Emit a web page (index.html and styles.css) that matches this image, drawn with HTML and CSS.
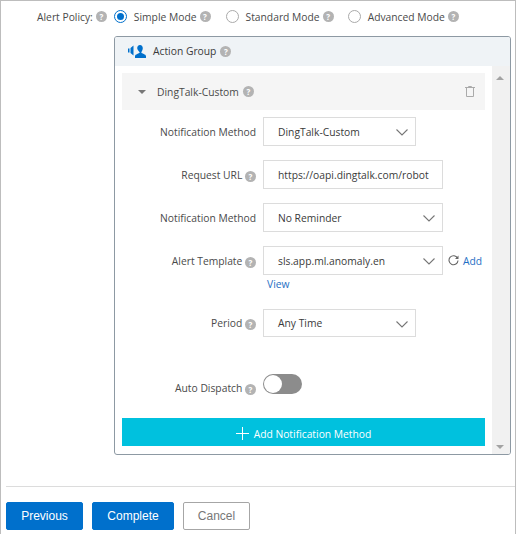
FILE: index.html
```html
<!DOCTYPE html>
<html lang="en">

<head>
    <meta charset="UTF-8">
    <title>Alert Policy</title>
    <link rel="stylesheet" href="styles.css">
</head>

<body>
    <div class="frame">
        <div class="policy">
            <span class="policy-label">Alert Policy:</span>
            <i class="help">?</i>
            <span class="radio checked"></span>
            <span class="radio-text">Simple Mode</span>
            <i class="help">?</i>
            <span class="radio second"></span>
            <span class="radio-text">Standard Mode</span>
            <i class="help">?</i>
            <span class="radio third"></span>
            <span class="radio-text">Advanced Mode</span>
            <i class="help">?</i>
        </div>

        <div class="panel">
            <div class="panel-head">
                <svg class="group-icon" width="18" height="13" viewBox="0 0 18 13">
                    <path d="M0 3.500h1.500v4H0zM2.500 3l3-2.500v10l-3-2.500z" fill="#0070cc" />
                    <path d="M12 0c1.800 0 2.800 1.300 2.800 3.200S13.500 6.500 13.300 7.500c.3 1.200 4.700 1.500 4.700 3.700V13H7v-1.800c0-2.200 4.400-2.500 4.700-3.700C11.500 6.500 9.200 5.100 9.200 3.200S10.200 0 12 0z" fill="#0070cc" />
                </svg>
                <span>Action Group</span>
                <i class="help">?</i>
            </div>
            <div class="panel-body">
                <div class="content">
                    <div class="item-head">
                        <span class="caret"></span>
                        <span>DingTalk-Custom</span>
                        <i class="help">?</i>
                        <svg class="trash" width="10" height="11" viewBox="0 0 10 11">
                            <path d="M0 1.500h10M3.500 1.500V.5h3v1M1.500 1.500v9h7v-9" fill="none" stroke="#aaa" />
                        </svg>
                    </div>

                    <div class="row row-first">
                        <label>Notification Method</label>
                        <div class="select short">DingTalk-Custom<svg class="chevron" width="12" height="7" viewBox="0 0 12 7"><path d="M.5.500l5.500 5.500 5.500-5.500" fill="none" stroke="#777" stroke-width="1.100" /></svg></div>
                    </div>
                    <div class="row">
                        <label>Request URL <i class="help">?</i></label>
                        <div class="select input">https://oapi.dingtalk.com/robot</div>
                    </div>
                    <div class="row">
                        <label>Notification Method</label>
                        <div class="select">No Reminder<svg class="chevron" width="12" height="7" viewBox="0 0 12 7"><path d="M.5.500l5.500 5.500 5.500-5.500" fill="none" stroke="#777" stroke-width="1.100" /></svg></div>
                    </div>
                    <div class="row">
                        <label>Alert Template <i class="help">?</i></label>
                        <div class="select">sls.app.ml.anomaly.en<svg class="chevron" width="12" height="7" viewBox="0 0 12 7"><path d="M.5.500l5.500 5.500 5.500-5.500" fill="none" stroke="#777" stroke-width="1.100" /></svg></div>
                        <svg class="refresh" width="11" height="11" viewBox="0 0 11 11">
                            <path d="M9.500 3.200A4.500 4.500 0 1 0 10 5.500" fill="none" stroke="#666" stroke-width="1.100" />
                            <path d="M10.500 0.500v3.500H7z" fill="#666" />
                        </svg>
                        <a class="link">Add</a>
                    </div>
                    <a class="link view">View</a>
                    <div class="row row-period">
                        <label>Period <i class="help">?</i></label>
                        <div class="select short period">Any Time<svg class="chevron" width="12" height="7" viewBox="0 0 12 7"><path d="M.5.500l5.500 5.500 5.500-5.500" fill="none" stroke="#777" stroke-width="1.100" /></svg></div>
                    </div>
                    <div class="row row-switch">
                        <label>Auto Dispatch <i class="help">?</i></label>
                        <div class="switch"><span class="knob"></span></div>
                    </div>

                    <div class="add-method">
                        <svg width="13" height="13" viewBox="0 0 13 13"><path d="M6.500 0v13M0 6.500h13" stroke="#fff" /></svg>
                        <span>Add Notification Method</span>
                    </div>
                </div>
                <div class="scrollbar">
                    <span class="arrow up"></span>
                    <span class="arrow down"></span>
                </div>
            </div>
        </div>

        <div class="footer">
            <button class="primary previous">Previous</button>
            <button class="primary complete">Complete</button>
            <button class="cancel">Cancel</button>
        </div>
    </div>
</body>

</html>
```

FILE: styles.css
```css
* {
    margin: 0;
    padding: 0;
    box-sizing: border-box;
}

body {
    font-family: "Open Sans", sans-serif;
    font-size: 10.3px;
    color: #4a4a4a;
    background: #fff;
}

.frame {
    width: 516px;
    height: 534px;
    border: 1px solid #bdbdbd;
    border-bottom: 0;
    padding-top: 8px;
}

.help {
    display: inline-block;
    width: 11px;
    height: 11px;
    border-radius: 50%;
    background: #b3b3b3;
    color: #fff;
    font-size: 8px;
    font-weight: 700;
    font-style: normal;
    line-height: 11px;
    text-align: center;
    vertical-align: -1px;
}

/* policy row */
.policy {
    display: flex;
    align-items: center;
    height: 15px;
    padding-left: 36px;
}

.policy-label {
    margin-right: 3px;
}

.radio {
    width: 13px;
    height: 13px;
    border: 1px solid #aaa;
    border-radius: 50%;
    background: #fff;
    margin-left: 7px;
}

.radio.checked {
    border-color: #0070cc;
    padding: 2px;
    background: #0070cc content-box;
}

.radio.second {
    margin-left: 15px;
}

.radio.third {
    margin-left: 14px;
}

.radio-text {
    margin: 0 3px 0 7px;
}

/* action group panel */
.panel {
    width: 397px;
    height: 419px;
    margin: 12px 0 0 113px;
    border: 1px solid #8d99a3;
    border-radius: 3px;
    overflow: hidden;
}

.panel-head {
    display: flex;
    align-items: center;
    gap: 4px;
    height: 29px;
    padding: 0 0 1px 13px;
    background: #eff3f6;
    color: #3a3a3a;
}

.group-icon {
    margin-right: 3px;
}

.panel-body {
    display: flex;
    height: 388px;
}

.content {
    width: 377px;
    padding: 7px 0 0 7px;
}

.item-head {
    display: flex;
    align-items: center;
    gap: 4px;
    width: 363px;
    height: 37px;
    padding: 0 10px 0 16px;
    background: #f5f5f5;
}

.caret {
    width: 0;
    height: 0;
    border: 4px solid transparent;
    border-top: 4px solid #777;
    border-bottom: 0;
    margin-right: 7px;
}

.trash {
    margin-left: auto;
}

.row {
    display: flex;
    align-items: center;
    margin-top: 14px;
}

.row-first {
    margin-top: 7px;
}

.row-period {
    margin-top: 17px;
}

.row-switch {
    align-items: flex-start;
    height: 20px;
    margin-top: 37px;
}

.row-switch label {
    padding-top: 7px;
}

.row label {
    width: 134px;
    margin-right: 7px;
    text-align: right;
}

.select {
    position: relative;
    width: 180px;
    height: 29px;
    padding: 1px 0 0 14px;
    border: 1px solid #dcdcdc;
    line-height: 27px;
    color: #3a3a3a;
    white-space: nowrap;
}

.select.short {
    width: 153px;
}

.select.period {
    height: 28px;
    padding-top: 0;
    line-height: 26px;
}

.chevron {
    position: absolute;
    right: 7px;
    top: 11px;
}

.refresh {
    margin-left: 5px;
}

.link {
    color: #1f6fc4;
}

.row .link {
    margin-left: 4px;
}

.view {
    display: block;
    margin: 2px 0 0 145px;
    line-height: 15px;
}

.switch {
    width: 39px;
    height: 20px;
    border-radius: 10px;
    background: #8c8c8c;
    padding: 1px;
}

.knob {
    display: block;
    width: 18px;
    height: 18px;
    border-radius: 50%;
    background: #fff;
}

.add-method {
    display: flex;
    align-items: center;
    justify-content: center;
    gap: 5px;
    width: 363px;
    height: 28px;
    margin-top: 24px;
    padding-top: 3px;
    background: #00c1de;
    color: #fff;
}

/* scrollbar */
.scrollbar {
    position: relative;
    width: 18px;
    margin-left: auto;
    background: #f1f1f1;
}

.arrow {
    position: absolute;
    left: 4px;
    border: 4px solid transparent;
}

.arrow.up {
    top: 10px;
    border-top: 0;
    border-bottom-color: #a3a3a3;
}

.arrow.down {
    bottom: 5px;
    border-bottom: 0;
    border-top-color: #a3a3a3;
}

/* footer */
.footer {
    display: flex;
    gap: 9px;
    height: 47px;
    margin: 31px 0 0 5px;
    padding-top: 15px;
    border-top: 1px solid #dcdcdc;
}

button {
    height: 28px;
    border: 1px solid #0070cc;
    border-radius: 2px;
    font-family: "Liberation Sans", Arial, sans-serif;
    font-size: 12px;
}

.primary {
    background: #0070cc;
    color: #fff;
}

.previous {
    width: 77px;
}

.complete {
    width: 82px;
}

.cancel {
    width: 67px;
    background: #fff;
    border-color: #a6a6a6;
    color: #777;
}
```
